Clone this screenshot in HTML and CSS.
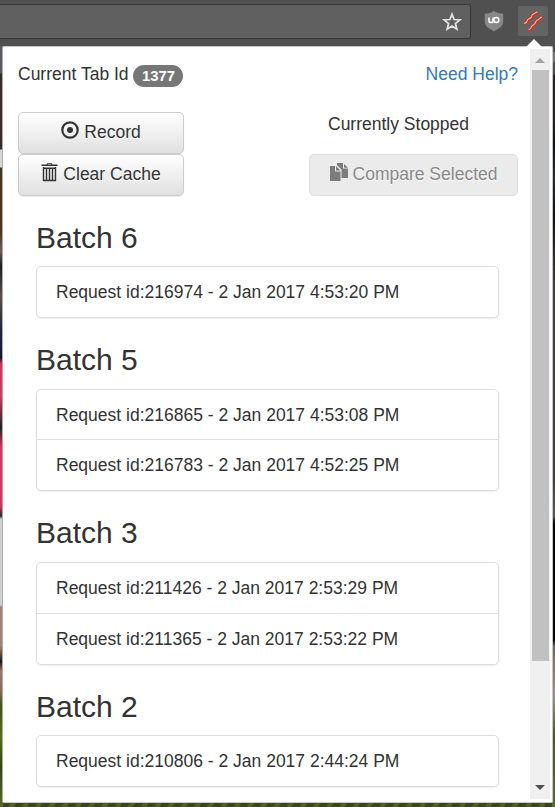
FILE: index.html
```html
<!DOCTYPE html>
<html lang="en">
<head>
<meta charset="utf-8">
<title>Request batches</title>
<link rel="stylesheet" href="styles.css">
</head>
<body>
<header class="toolbar">
  <div class="omnibox">
    <svg class="star" width="20" height="20" viewBox="0 0 20 20"><path d="M10 2.200l2.100 5.300 5.800.3-4.500 3.700 1.500 5.700-4.900-3.200-4.900 3.200 1.500-5.700L2.100 7.800l5.800-.3z" fill="none" stroke="#e4e4e4" stroke-width="1.700"/></svg>
  </div>
  <div class="extension shield-wrap">
    <svg width="20" height="22" viewBox="0 0 20 22"><path d="M10 .8C7 3 4 3.800.8 3.800v8c0 4.200 4 7 9.200 9.500 5.200-2.500 9.200-5.300 9.200-9.500v-8C16 3.800 13 3 10 .8z" fill="#888"/><path d="M5 7.500v3.200c0 2.500 4 2.500 4 0V7.500" fill="none" stroke="#fff" stroke-width="1.500"/><circle cx="12.300" cy="10" r="2.500" fill="none" stroke="#fff" stroke-width="1.500"/></svg>
  </div>
  <div class="extension active">
    <svg width="20" height="20" viewBox="0 0 20 20" fill="none"><g stroke="#d52b25" stroke-width="3.200"><path d="M1 12c2 .5 3-1 3.200-2.500S7 7.500 8 6.500s.5-3 2.500-3.500 2-2 4-2"/><path d="M5.500 18.500c2 .5 2.500-1.500 3-3s2.500-1.500 3.500-3 .5-3 2.500-3.500 2-2.500 4.500-3"/></g><g stroke="#f1c39d" stroke-width="1.100"><path d="M1 12c2 .5 3-1 3.200-2.500S7 7.500 8 6.500s.5-3 2.500-3.500 2-2 4-2"/><path d="M5.500 18.500c2 .5 2.500-1.500 3-3s2.500-1.500 3.500-3 .5-3 2.500-3.500 2-2.500 4.500-3"/></g></svg>
  </div>
</header>
<div class="backdrop">
  <main class="popup">
    <div class="content">
      <div class="status-line">
        <div>Current Tab Id <span class="badge">1377</span></div>
        <a class="help">Need Help?</a>
      </div>
      <div class="controls">
        <div class="actions">
          <button class="btn"><svg width="18" height="18" viewBox="0 0 18 18"><circle cx="9" cy="9" r="7.700" fill="none" stroke="#333" stroke-width="2.200"/><circle cx="9" cy="9" r="3" fill="#333"/></svg><span>Record</span></button>
          <button class="btn"><svg width="17" height="20" viewBox="0 0 17 20"><path d="M.5 4V2.500H5.500L6.500 1h4l1 1.500h5V4zM6.500 2.500h4l-.5-.7H7z" fill="#333" fill-rule="evenodd"/><path d="M2.500 5v13.500h12V5M2 6.200h13M5.500 6v12M8.500 6v12M11.500 6v12" fill="none" stroke="#333" stroke-width="1.400"/></svg><span>Clear Cache</span></button>
        </div>
        <div class="compare">
          <p>Currently Stopped</p>
          <button class="btn disabled"><svg width="19" height="19" viewBox="0 0 19 19" fill="#7c7c7c"><path d="M0 3h5v5.500h5.500V18H0z"/><path d="M6 3l4.500 4.500H6z"/><path d="M7 0h6v5.500h5V15h-6.500V6.500L7 2z"/><path d="M14 1l4 3.700h-4z"/></svg><span>Compare Selected</span></button>
        </div>
      </div>
      <div class="batches">
        <section><h3>Batch 6</h3><ul><li>Request id:216974 - 2 Jan 2017 4:53:20 PM</li></ul></section>
        <section class="compact"><h3>Batch 5</h3><ul><li>Request id:216865 - 2 Jan 2017 4:53:08 PM</li><li>Request id:216783 - 2 Jan 2017 4:52:25 PM</li></ul></section>
        <section class="roomy"><h3>Batch 3</h3><ul><li>Request id:211426 - 2 Jan 2017 2:53:29 PM</li><li>Request id:211365 - 2 Jan 2017 2:53:22 PM</li></ul></section>
        <section><h3>Batch 2</h3><ul><li>Request id:210806 - 2 Jan 2017 2:44:24 PM</li></ul></section>
      </div>
    </div>
    <div class="scrollbar">
      <svg width="10" height="5" viewBox="0 0 10 5"><path d="M0 5l5-5 5 5z" fill="#a3a3a3"/></svg>
      <div class="thumb"></div>
      <svg class="down" width="10" height="5" viewBox="0 0 10 5"><path d="M0 0l5 5 5-5z" fill="#505050"/></svg>
    </div>
  </main>
</div>
</body>
</html>
```
FILE: styles.css
```css
* { box-sizing: border-box; }
body {
  margin: 0;
  height: 807px;
  overflow: hidden;
  font: 17.5px/25px "Liberation Sans", Arial, sans-serif;
  color: #333;
  background: #505050;
}
.toolbar {
  display: flex;
  height: 46px;
  padding-top: 4px;
  background: #505050;
}
.omnibox {
  display: flex;
  justify-content: flex-end;
  width: 471px;
  height: 35px;
  padding: 7px 8px 0 0;
  background: #606060;
  border: 1px solid #393939;
  border-left: 0;
  border-radius: 0 3px 3px 0;
}
.extension {
  display: flex;
  align-items: center;
  justify-content: center;
  width: 30px;
  height: 30px;
  margin-top: 2px;
}
.shield-wrap { margin-left: 8px; }
.active {
  margin-left: 9px;
  background: #646464;
  border-radius: 2px;
  position: relative;
}
.active::after {
  content: "";
  position: absolute;
  top: 33px;
  left: 8px;
  border: 8px solid transparent;
  border-top: 0;
  border-bottom-color: #fff;
}
.backdrop {
  height: 761px;
  padding: 0 2px;
  background:
    linear-gradient(#777, #777) right 0 top 6px / 2px 10px no-repeat,
    linear-gradient(#5a5b60 0 27px, #382d23 28px 103px, #d8d8d8 104px 121px, #45382a 122px 185px, #705c55 205px, #1b1e25 220px, #5b5245 250px, #242c3c 280px, #111a2b 312px, #ca3656 318px, #b94560 350px, #222 382px, #c6395b 400px 460px, #232a34 470px, #d0d0d0 473px 559px, #a48477 561px 600px, #1c1716 616px, #9b7965 625px, #876b5d 645px, #43521f 660px, #566b22 690px, #35441c 720px, #57672b 761px) left / 3px 761px no-repeat,
    linear-gradient(#514e4d 0 28px, #27211c 29px 70px, #101113 100px, #272a32 130px, #111 170px, #443e32 240px 430px, #67584b 470px, #020202 477px 594px, #746657 600px, #a18d81 650px, #4c5a29 690px, #556c2d 761px) right / 3px 761px no-repeat,
    repeating-linear-gradient(115deg, #374719 0 4px, #526128 7px 9px, #303f19 12px);
}
.popup {
  display: flex;
  height: 757px;
  border: 1px solid #c8c8c8;
  border-left-color: #aaa;
  border-radius: 2px;
  background: #fff;
}
.content {
  width: 527px;
  padding: 15px 12px 0 15px;
}
.status-line {
  display: flex;
  justify-content: space-between;
  height: 50px;
}
.badge {
  display: inline-block;
  height: 22px;
  padding: 0 8.5px;
  border-radius: 11px;
  background: #777;
  color: #fff;
  font-size: 14.8px;
  line-height: 23px;
  font-weight: 700;
  vertical-align: -1px;
}
.help { color: #337ab7; }
.controls {
  display: flex;
  justify-content: space-between;
  height: 109px;
}
.actions { width: 166px; }
.btn {
  display: flex;
  align-items: center;
  justify-content: center;
  gap: 5px;
  width: 100%;
  height: 42px;
  padding: 0 0 1px;
  border: 1px solid #ccc;
  border-radius: 5px;
  background: linear-gradient(#fff, #e0e0e0);
  box-shadow: 0 1px 1px rgba(0, 0, 0, .08);
  color: #333;
  font: inherit;
  text-shadow: 0 1px 0 #fff;
}
.btn svg {
  flex: none;
  margin-top: -5px;
}
.compare { width: 209px; }
.compare p {
  height: 42px;
  margin: 0;
  padding: 0 0 0 19px;
}
.disabled {
  gap: 4px;
  border-color: #dedede;
  background: #ebebeb;
  box-shadow: none;
  color: #898989;
}
.batches { padding: 0 19px 0 18px; }
section { margin-bottom: 25px; }
h3 {
  height: 33px;
  margin: 0 0 12px;
  font-size: 30px;
  font-weight: 400;
  line-height: 33px;
}
.compact h3, .roomy h3 { margin-bottom: 13px; }
ul {
  margin: 0;
  padding: 0;
  list-style: none;
  border: 1px solid #ddd;
  border-radius: 5px;
  box-shadow: 0 1px 2px rgba(0, 0, 0, .075);
}
li {
  height: 50px;
  padding: 13px 19px 0;
}
.compact li:first-child { height: 49px; }
li + li {
  height: 51px;
  border-top: 1px solid #ddd;
}
.scrollbar {
  display: flex;
  flex-direction: column;
  align-items: center;
  width: 20px;
  height: 750px;
  margin-top: 2px;
  padding: 9px 0 9px;
  background: #f0f0f0;
}
.thumb {
  width: 17px;
  height: 591px;
  margin-top: 7px;
  background: #c1c1c1;
}
.down { margin-top: auto; }
```
